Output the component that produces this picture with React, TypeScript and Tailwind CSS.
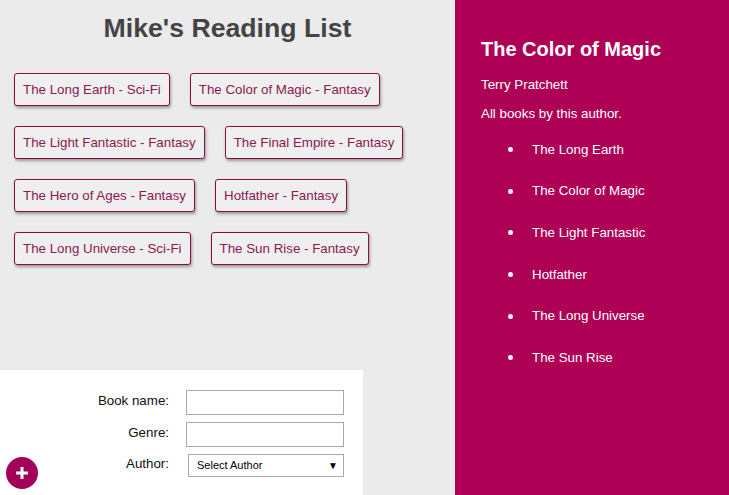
import React from 'react';

const books = [
  { name: 'The Long Earth', genre: 'Sci-Fi' },
  { name: 'The Color of Magic', genre: 'Fantasy' },
  { name: 'The Light Fantastic', genre: 'Fantasy' },
  { name: 'The Final Empire', genre: 'Fantasy' },
  { name: 'The Hero of Ages', genre: 'Fantasy' },
  { name: 'Hotfather', genre: 'Fantasy' },
  { name: 'The Long Universe', genre: 'Sci-Fi' },
  { name: 'The Sun Rise', genre: 'Fantasy' },
];

const authorBooks = [
  'The Long Earth',
  'The Color of Magic',
  'The Light Fantastic',
  'Hotfather',
  'The Long Universe',
  'The Sun Rise',
];

const App = () => {
  return (
    <div
      className="flex h-[495px] w-[729px] overflow-hidden"
      style={{ fontFamily: '"Liberation Sans", Arial, sans-serif' }}
    >
      {/* Book list */}
      <div className="relative flex w-[455px] shrink-0 flex-col bg-[#ebebeb]">
        <h1 className="pt-[12px] text-center text-[26.67px] font-bold leading-[32px] text-[#444]">
          Mike's Reading List
        </h1>
        <div className="mt-[29px] flex flex-wrap gap-x-[20px] gap-y-[20px] px-[14px]">
          {books.map((book) => (
            <button
              key={book.name}
              className="h-[33px] rounded-[3px] border border-[#8a0a4a] bg-[#efefef] px-[8px] text-[13.33px] leading-[17px] text-[#8b1850] shadow-[1px_2px_3px_rgba(0,0,0,0.35)]"
            >
              {book.name} - {book.genre}
            </button>
          ))}
        </div>

        {/* Add form */}
        <div className="mt-auto h-[125px] w-[363px] bg-white pt-[20px]">
          <div className="grid grid-cols-[169px_158px] items-center gap-x-[17px] gap-y-[7px] text-[13.33px] text-[#111]">
            <label className="mb-[4px] text-right">Book name:</label>
            <input className="h-[25px] border border-[#a9a9a9] bg-white" />
            <label className="mb-[4px] text-right">Genre:</label>
            <input className="h-[25px] border border-[#a9a9a9] bg-white" />
            <label className="mb-[3px] text-right">Author:</label>
            <div className="ml-[2px] flex h-[23px] w-[156px] items-center justify-between border border-[#a9a9a9] bg-white pl-[8px] pr-[5px] text-[11px] text-black">
              <span>Select Author</span>
              <span className="text-[10px]">▼</span>
            </div>
          </div>
        </div>

        <button className="absolute left-[6px] top-[457px] flex h-[32px] w-[32px] items-center justify-center rounded-full bg-[#a3005a]">
          <svg width="16" height="16" viewBox="0 0 16 16">
            <path d="M8 2v12M2 8h12" stroke="white" strokeWidth="3" />
          </svg>
        </button>
      </div>

      {/* Details */}
      <div className="flex-1 bg-[#ae0055] pl-[26px] text-white shadow-[-3px_0_6px_rgba(0,0,0,0.35)]">
        <h2 className="pt-[37px] text-[20px] font-bold leading-[24px]">The Color of Magic</h2>
        <p className="mt-[16px] text-[13.33px] leading-[16px]">Terry Pratchett</p>
        <p className="mt-[13px] text-[13.33px] leading-[16px]">All books by this author.</p>
        <ul className="mt-[7px]">
          {authorBooks.map((title) => (
            <li key={title} className="flex h-[41.6px] items-center text-[13.33px]">
              <span className="ml-[27px] h-[5px] w-[5px] rounded-full bg-white" />
              <span className="ml-[19px]">{title}</span>
            </li>
          ))}
        </ul>
      </div>
    </div>
  );
};

export default App;
